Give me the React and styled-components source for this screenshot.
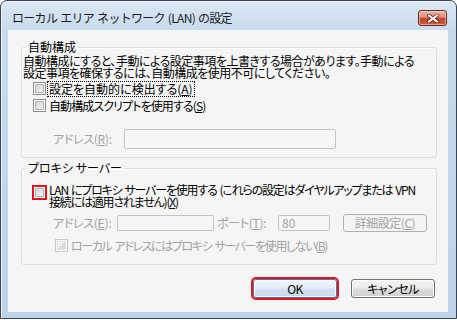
import React from 'react';
import styled, { createGlobalStyle } from 'styled-components';

const GlobalStyle = createGlobalStyle`
  html, body {
    margin: 0;
    padding: 0;
    background: #ffffff;
  }
  body {
    font-family: "Noto Sans CJK JP", "Liberation Sans", sans-serif;
    font-size: 12px;
    color: #000;
  }
`;

const Window = styled.div`
  width: 457px;
  height: 319px;
  box-sizing: border-box;
  border: 1px solid #3b4552;
  border-radius: 7px 7px 0 0;
  background: linear-gradient(to bottom, #dce8f4 0px, #c8dbee 28px, #bcd3ea 100%);
  box-shadow: inset 1px 1px 0 #f0f6fc, 0 1px 0 #49c6e6;
  display: flex;
  flex-direction: column;
`;

const TitleBar = styled.div`
  height: 29px;
  display: flex;
  align-items: flex-start;
  justify-content: space-between;
  padding: 0 9px 0 11px;
`;

const Title = styled.div`
  margin-top: 11px;
  font-size: 12px;
  line-height: 12px;
  color: #1c1c1c;
  letter-spacing: -0.7px;
  word-spacing: 1px;
`;

const CloseButton = styled.div`
  margin-top: 9px;
  width: 29px;
  height: 16px;
  box-sizing: border-box;
  border: 1px solid #6a2a20;
  border-radius: 3px;
  background: linear-gradient(to bottom, #ecb3a5 0%, #dc8e7b 45%, #c4452a 52%, #d0593d 100%);
  box-shadow: inset 0 0 0 1px rgba(255, 220, 210, 0.55);
  display: flex;
  align-items: center;
  justify-content: center;
`;

const Client = styled.div`
  flex: 1;
  margin: 0 8px 6px 7px;
  background: #f5f5f5;
  padding: 11px 11px 0 13px;
  display: flex;
  flex-direction: column;
`;

const Group = styled.fieldset`
  margin: 0;
  margin-top: ${p => p.$top || 0}px;
  padding: 0;
  border: 1px solid #d5dfe5;
  border-radius: 3px;
  box-shadow: inset 1px 1px 0 #ffffff;
  min-width: 0;
`;

const Legend = styled.legend`
  margin-left: 4px;
  padding: 0 2px;
  font-size: 12px;
  line-height: 12px;
  height: 12px;
  font-feature-settings: "palt";
`;

const GroupBody = styled.div`
  padding: ${p => p.$pad};
  display: flex;
  flex-direction: column;
`;

const Desc = styled.div`
  margin: 2px 0 0 1px;
  font-size: 12px;
  line-height: 12px;
  font-feature-settings: "palt";
  letter-spacing: -0.5px;
  white-space: nowrap;
`;

const Row = styled.div`
  display: flex;
  align-items: ${p => p.$align || 'center'};
  margin-top: ${p => p.$top || 0}px;
  padding-left: ${p => p.$indent || 0}px;
  height: ${p => (p.$h ? `${p.$h}px` : 'auto')};
`;

const Check = styled.span`
  flex: none;
  width: 13px;
  height: 13px;
  box-sizing: border-box;
  border: 1px solid ${p => (p.$disabled ? '#c6c6c6' : '#8e8f8f')};
  background: #fff;
  padding: 1px;
  margin-top: ${p => p.$top || 0}px;
  outline: ${p => (p.$mark ? '2px solid #e8101c' : 'none')};
  outline-offset: -1px;
  &::after {
    content: '';
    display: block;
    width: 9px;
    height: 9px;
    box-sizing: border-box;
    border: 1px solid ${p => (p.$disabled ? '#e0e0e0' : '#b2b6bb')};
    background: ${p =>
      p.$disabled
        ? 'linear-gradient(135deg, #f4f4f4 50%, #dcdcdc 50%)'
        : 'linear-gradient(135deg, #cdd0d5 0%, #e6e7e9 60%, #f5f5f5 100%)'};
  }
`;

const Label = styled.span`
  margin-left: ${p => p.$gap || 3}px;
  font-size: 12px;
  line-height: 12px;
  font-feature-settings: "palt";
  letter-spacing: ${p => p.$ls || 0}px;
  word-spacing: ${p => p.$ws || 0}px;
  white-space: nowrap;
  color: ${p => (p.$disabled ? '#a2a2a2' : '#000')};
  outline: ${p => (p.$focus ? '1px dotted #000' : 'none')};
  outline-offset: 1px;
`;

const Multi = styled.span`
  margin-left: 3px;
  font-size: 12px;
  line-height: 12px;
  font-feature-settings: "palt";
  letter-spacing: -1.2px;
  word-spacing: 1.5px;
  white-space: nowrap;
`;

const FieldLabel = styled.span`
  width: ${p => p.$w}px;
  margin-left: ${p => p.$ml || 0}px;
  flex: none;
  font-size: 12px;
  line-height: 12px;
  font-feature-settings: "palt";
  letter-spacing: -0.3px;
  color: #a2a2a2;
  white-space: nowrap;
`;

const Input = styled.div`
  flex: none;
  width: ${p => p.$w}px;
  height: ${p => p.$h}px;
  box-sizing: border-box;
  border: 1px solid #c4c4c4;
  border-radius: 2px;
  background: #f6f6f6;
  color: #a2a2a2;
  font-size: 12px;
  line-height: ${p => p.$h - 2}px;
  padding-left: 3px;
`;

const Button = styled.div`
  flex: none;
  width: ${p => p.$w}px;
  height: ${p => p.$h}px;
  margin-left: ${p => p.$ml || 0}px;
  box-sizing: border-box;
  border: 1px solid #707070;
  border-radius: 3px;
  background: linear-gradient(to bottom, #f3f3f3 0%, #ebebeb 48%, #dddddd 52%, #d0d0d0 100%);
  box-shadow: inset 0 0 0 1px #fbfbfb;
  display: flex;
  align-items: center;
  justify-content: center;
  font-size: 12px;
  line-height: 12px;
  font-feature-settings: "palt";
  letter-spacing: -0.5px;
  color: #000;
`;

const DefaultButton = styled(Button)`
  border-color: #3c7fb1;
  background: linear-gradient(to bottom, #f1f6fb 0%, #e3ecf6 48%, #d3e1ef 52%, #c6d8ea 100%);
  outline: 2px solid #e8101c;
  outline-offset: 0px;
`;

const DisabledButton = styled(Button)`
  border-color: #adb2b5;
  background: #f4f4f4;
  box-shadow: none;
  color: #a2a2a2;
`;

const Buttons = styled.div`
  display: flex;
  justify-content: flex-end;
  gap: 14px;
  margin-top: 14px;
  padding-right: 2px;
`;

const CloseGlyph = () => (
  <svg width="12" height="9" viewBox="0 0 12 9">
    <path d="M2 1.5 L10 7.5 M10 1.5 L2 7.5" stroke="#5a2219" strokeWidth="3.6" strokeLinecap="square" />
    <path d="M2 1.5 L10 7.5 M10 1.5 L2 7.5" stroke="#ffffff" strokeWidth="2" strokeLinecap="square" />
  </svg>
);

export default function App() {
  return (
    <>
      <GlobalStyle />
      <Window>
        <TitleBar>
          <Title>ローカル エリア ネットワーク (LAN) の設定</Title>
          <CloseButton>
            <CloseGlyph />
          </CloseButton>
        </TitleBar>
        <Client>
          <Group>
            <Legend>自動構成</Legend>
            <GroupBody $pad="0 0 8px 0">
              <Desc>
                自動構成にすると、手動による設定事項を上書きする場合があります。手動による
                <br />
                設定事項を確保するには、自動構成を使用不可にしてください。
              </Desc>
              <Row $top={2} $indent={11} $h={15}>
                <Check />
                <Label $focus>設定を自動的に検出する(<u>A</u>)</Label>
              </Row>
              <Row $top={2} $indent={11} $h={15}>
                <Check />
                <Label $ls={-0.9}>自動構成スクリプトを使用する(<u>S</u>)</Label>
              </Row>
              <Row $top={16} $indent={31} $h={20}>
                <FieldLabel $w={71}>アドレス(<u>R</u>):</FieldLabel>
                <Input $w={212} $h={20} />
              </Row>
            </GroupBody>
          </Group>

          <Group $top={4}>
            <Legend>プロキシ サーバー</Legend>
            <GroupBody $pad="10px 0 11px 0">
              <Row $align="flex-start" $indent={11}>
                <Check $mark $top={2} />
                <Multi>
                  LAN にプロキシ サーバーを使用する (これらの設定はダイヤルアップまたは VPN
                  <br />
                  接続には適用されません)(<u>X</u>)
                </Multi>
              </Row>
              <Row $top={6} $indent={31} $h={18}>
                <FieldLabel $w={64}>アドレス(<u>E</u>):</FieldLabel>
                <Input $w={97} $h={16} />
                <FieldLabel $w={61} $ml={3}>ポート(<u>T</u>):</FieldLabel>
                <Input $w={52} $h={16}>80</Input>
                <DisabledButton $w={84} $h={18} $ml={13}>
                  詳細設定(<u>C</u>)
                </DisabledButton>
              </Row>
              <Row $top={6} $indent={33} $h={15}>
                <Check $disabled />
                <Label $disabled $ls={-1.4} $ws={2}>ローカル アドレスにはプロキシ サーバーを使用しない(<u>B</u>)</Label>
              </Row>
            </GroupBody>
          </Group>

          <Buttons>
            <DefaultButton $w={84} $h={19}>OK</DefaultButton>
            <Button $w={84} $h={19}>キャンセル</Button>
          </Buttons>
        </Client>
      </Window>
    </>
  );
}
